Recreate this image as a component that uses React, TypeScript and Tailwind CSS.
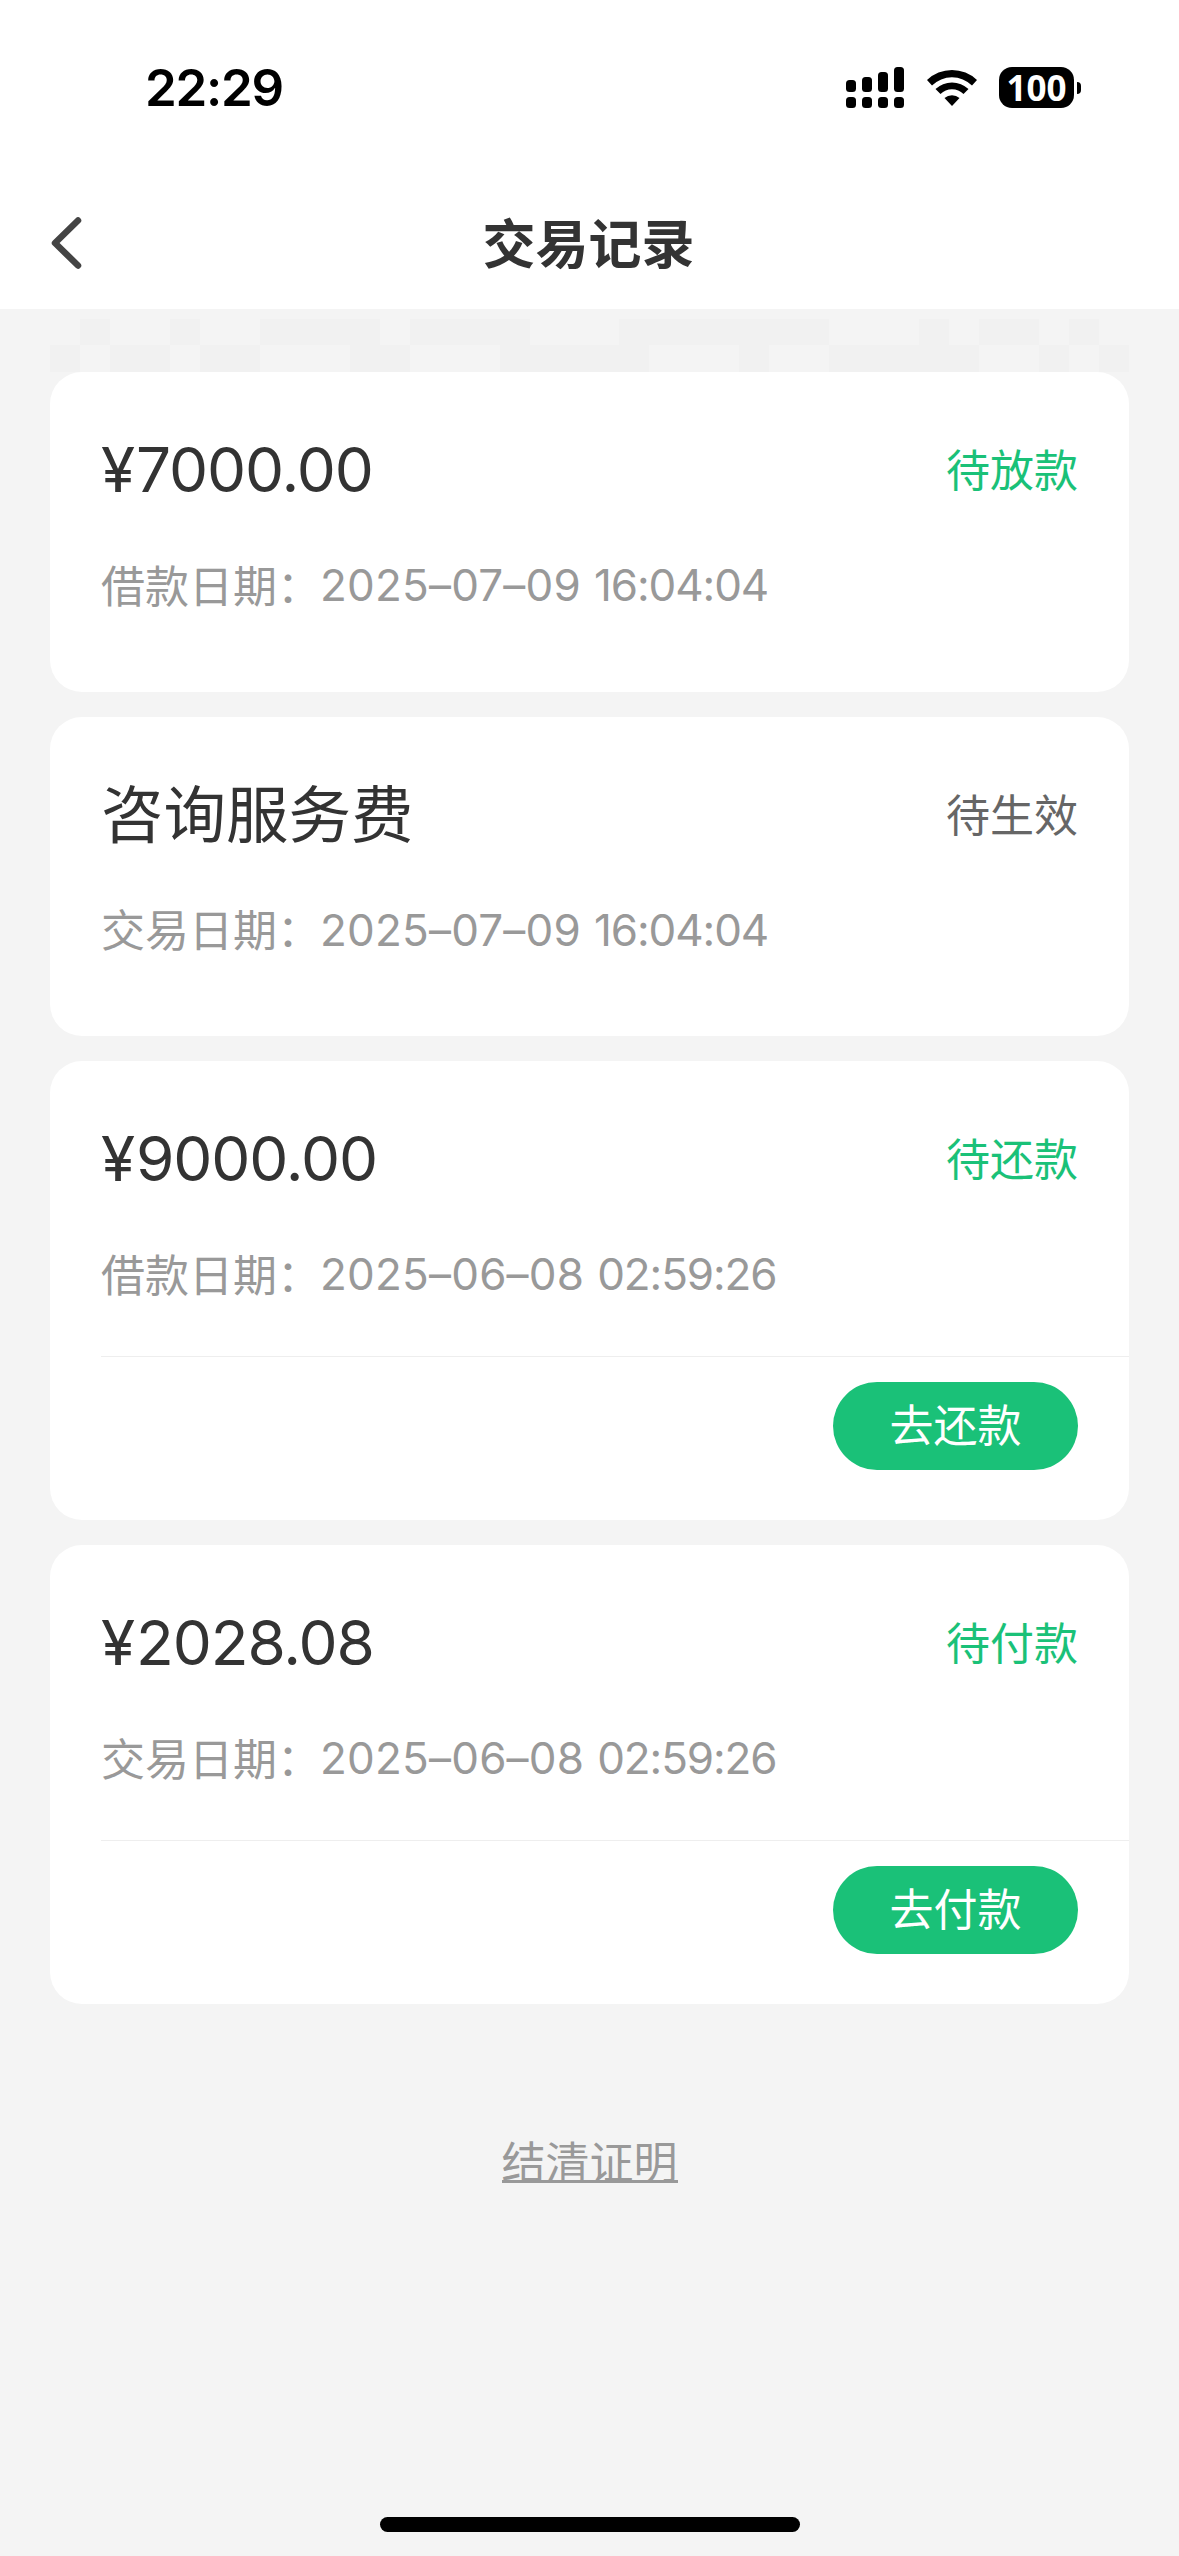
import React from 'react';
import { clsx } from 'clsx';

type RecordItem = {
  id: number;
  title: string;
  isAmount: boolean;
  dateLabel: string;
  date: string;
  time: string;
  status: string;
  muted?: boolean;
  action?: string;
};

const records: RecordItem[] = [
  { id: 1, title: '7000.00', isAmount: true, dateLabel: '借款日期', date: '2025–07–09', time: '16:04:04', status: '待放款' },
  { id: 2, title: '咨询服务费', isAmount: false, dateLabel: '交易日期', date: '2025–07–09', time: '16:04:04', status: '待生效', muted: true },
  { id: 3, title: '9000.00', isAmount: true, dateLabel: '借款日期', date: '2025–06–08', time: '02:59:26', status: '待还款', action: '去还款' },
  { id: 4, title: '2028.08', isAmount: true, dateLabel: '交易日期', date: '2025–06–08', time: '02:59:26', status: '待付款', action: '去付款' },
];

// '#' is a tinted tile, '.' is empty
const mosaicRows = [
  '.#..#..####.####...#######...#.##.#.',
  '#.##.##...##...#####...#..#####..#.#',
];

const SignalIcon = () => (
  <svg width="58" height="41" viewBox="0 0 58 41" fill="#000">
    <rect x="0" y="13" width="10" height="12" rx="3.5" />
    <rect x="16" y="10" width="10" height="15" rx="3.5" />
    <rect x="32" y="5" width="10" height="20" rx="3.5" />
    <rect x="48" y="0" width="10" height="25" rx="3.5" />
    <rect x="0" y="30" width="10" height="11" rx="3.5" />
    <rect x="16" y="30" width="10" height="11" rx="3.5" />
    <rect x="32" y="30" width="10" height="11" rx="3.5" />
    <rect x="48" y="30" width="10" height="11" rx="3.5" />
  </svg>
);

const WifiIcon = () => (
  <svg width="50" height="38" viewBox="0 0 50 38" fill="#000">
    <path d="M0 11 A36 36 0 0 1 50 11 L45 16.5 A28.5 28.5 0 0 0 5 16.5 Z" />
    <path d="M8.5 20 A24 24 0 0 1 41.5 20 L36.5 25 A16.5 16.5 0 0 0 13.5 25 Z" />
    <path d="M17.5 29 A11.5 11.5 0 0 1 32.5 29 L25 37 Z" />
  </svg>
);

const StatusBar = () => (
  <div className="flex h-[175px] items-center justify-between pr-[98px] pl-[145px]">
    <span className="text-[51px] leading-none font-semibold tracking-[-1.3px] text-black">22:29</span>
    <div className="flex items-center">
      <SignalIcon />
      <div className="ml-[23px]">
        <WifiIcon />
      </div>
      <div className="ml-[22px] flex items-center gap-[3px]">
        <div className="flex h-[41px] w-[75px] items-center justify-center rounded-[13px] bg-black pb-[1px] font-['Open_Sans',sans-serif] text-[35px] leading-none font-bold text-white">
          100
        </div>
        <div className="h-[12px] w-[4px] rounded-r-full bg-black" />
      </div>
    </div>
  </div>
);

const NavBar = () => (
  <div className="grid h-[134px] grid-cols-[1fr_auto_1fr] items-center pt-[1px] pr-[52px] pl-[50px]">
    <svg width="32" height="54" viewBox="0 0 32 54" fill="none" stroke="#444" strokeWidth="6.5" strokeLinecap="round" strokeLinejoin="round">
      <path d="M28 4.5 L5 27 L28 49.5" />
    </svg>
    <h1 className="pt-[6px] text-[53px] leading-none font-bold text-[#333]">交易记录</h1>
  </div>
);

const Mosaic = () => (
  <div className="flex h-[63px] flex-col justify-end px-[50px]">
    {mosaicRows.map((row, i) => (
      <div key={i} className={clsx('grid grid-cols-36', i === 0 ? 'h-[26px]' : 'h-[27px]')}>
        {row.split('').map((cell, j) => (
          <div key={j} className={cell === '#' ? 'bg-[#f1f1f1]' : ''} />
        ))}
      </div>
    ))}
  </div>
);

const RecordCard = ({ item }: { item: RecordItem }) => (
  <div className={clsx('rounded-[32px] bg-white pl-[51px]', item.action ? 'h-[459px]' : 'h-[319.5px]')}>
    <div className="flex h-[295px] flex-col pt-[57px] pr-[51px]">
      <div className="flex h-[80px] items-center justify-between">
        {item.isAmount ? (
          <span className="flex pt-[2px] text-[62px] leading-none tracking-[-1.1px] text-[#333]">
            <span className="mr-[2px]">¥</span>
            <span>{item.title}</span>
          </span>
        ) : (
          <span className="pt-[4px] text-[62.5px] leading-none text-[#333]">{item.title}</span>
        )}
        <span className={clsx('pt-[4px] text-[44px] leading-none', item.muted ? 'text-[#666]' : 'text-[#1ac178]')}>
          {item.status}
        </span>
      </div>
      <div className="mt-[46px] flex h-[60px] items-center text-[44px] leading-none whitespace-nowrap text-[#999]">
        <span className="w-[219px] pt-[3px]">{item.dateLabel}{'\uFF1A'}</span>
        <span className="mr-[13px] tracking-[0.2px]">{item.date}</span>
        <span className="tracking-[-1.1px]">{item.time}</span>
      </div>
    </div>
    {item.action && (
      <div className="flex justify-end border-t border-[#eee] pt-[25px] pr-[51px]">
        <button className="flex h-[88px] w-[245px] items-center justify-center rounded-full bg-[#1ac178] text-[44px] leading-none text-white">
          {item.action}
        </button>
      </div>
    )}
  </div>
);

export default function App() {
  return (
    <div className="flex h-[2556px] w-[1179px] flex-col bg-[#f4f4f4] font-['Inter','Noto_Sans_CJK_SC',sans-serif]">
      <header className="bg-white">
        <StatusBar />
        <NavBar />
      </header>
      <Mosaic />
      <main className="flex flex-col gap-[25px] px-[50px]">
        {records.map((item) => (
          <RecordCard key={item.id} item={item} />
        ))}
      </main>
      <div className="mt-[143px] flex justify-center">
        <a className="border-b-[3px] border-[#999] text-[44px] leading-[33px] text-[#999]">结清证明</a>
      </div>
      <div className="mt-auto mb-[24px] h-[15px] w-[420px] self-center rounded-full bg-black" />
    </div>
  );
}
